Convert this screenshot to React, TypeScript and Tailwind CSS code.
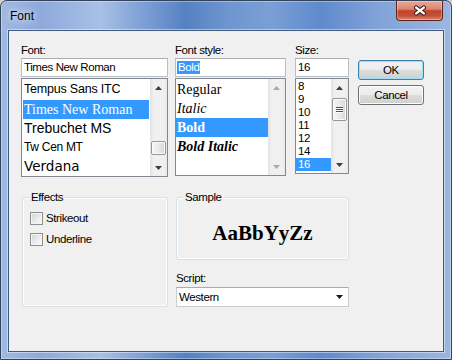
import React from "react";

const ui =
  "font-['Liberation_Sans',Arial,sans-serif] text-[11.5px] leading-[13px] tracking-[-0.4px] text-black";

function Arrow({ up, color }: { up?: boolean; color: string }) {
  return (
    <svg width="7" height="4" viewBox="0 0 7 4" className="block">
      <path d={up ? "M0 4L3.5 0L7 4Z" : "M0 0L7 0L3.5 4Z"} fill={color} />
    </svg>
  );
}

function VScroll({
  enabled,
  thumbClass,
  grip,
}: {
  enabled: boolean;
  thumbClass?: string;
  grip?: boolean;
}) {
  const c = enabled ? "#3f3f3f" : "#a9a9a9";
  return (
    <div className="relative flex h-full w-[17px] shrink-0 flex-col bg-[linear-gradient(to_right,#e2e2e2,#f0f0f0_20%,#f0f0f0_80%,#e9e9e9)]">
      <div className="flex h-[17px] items-center justify-center">
        <Arrow up color={c} />
      </div>
      <div className="flex-1" />
      <div className="flex h-[17px] items-center justify-center">
        <Arrow color={c} />
      </div>
      {thumbClass && (
        <div
          className={`absolute left-[1px] flex w-[15px] flex-col items-center justify-center gap-[1px] rounded-[2px] border border-[#979797] bg-[linear-gradient(to_right,#f5f5f5,#e9e9e9_50%,#d6d6d6)] shadow-[inset_0_0_0_1px_#fbfbfb] ${thumbClass}`}
        >
          {grip && (
            <>
              <div className="h-[1px] w-[7px] bg-[#505050] shadow-[0_1px_0_#ffffff]" />
              <div className="h-[1px] w-[7px] bg-[#505050] shadow-[0_1px_0_#ffffff]" />
              <div className="h-[1px] w-[7px] bg-[#505050] shadow-[0_1px_0_#ffffff]" />
            </>
          )}
        </div>
      )}
    </div>
  );
}

function Button({ label, def }: { label: string; def?: boolean }) {
  return (
    <div
      className={`flex h-[20px] w-[66px] items-center justify-center rounded-[3px] border bg-[linear-gradient(to_bottom,#f2f2f2,#ebebeb_48%,#dddddd_52%,#cfcfcf)] ${
        def
          ? "border-[#3c7fb1] shadow-[inset_0_0_0_1px_#9fe0f8]"
          : "border-[#707070] shadow-[inset_0_0_0_1px_#fcfcfc]"
      }`}
    >
      <span className={ui}>{label}</span>
    </div>
  );
}

function CheckRow({ label }: { label: string }) {
  return (
    <div className="flex h-[13px] items-center gap-[3px]">
      <div className="h-[13px] w-[13px] border border-[#8e8f8f] bg-[linear-gradient(135deg,#d2d3d6,#eeeeee_60%,#f9f9f9)] shadow-[inset_0_0_0_1px_#f4f4f4]" />
      <span className={ui}>{label}</span>
    </div>
  );
}

export default function App() {
  return (
    <div className="h-[360px] w-[452px] bg-[#cfcfcf]">
      <div className="flex h-[360px] w-[452px] flex-col rounded-t-[7px] border border-[#33435a] bg-[linear-gradient(to_right,#9fb9e2_0%,#8eaadb_9%,#a8c0e6_22%,#7c9ed5_32%,#5581c2_41%,#6d95cf_50%,#7a9fd6_60%,#5f8acc_71%,#82a3d9_84%,#9bb6e1_100%)] shadow-[inset_0_0_0_1px_rgba(255,255,255,0.35)]">
        {/* title bar */}
        <div className="flex h-[29px] shrink-0 items-start justify-between">
          <div className="pl-[9px] pt-[8px] font-['Liberation_Sans',Arial,sans-serif] text-[12px] leading-[14px] text-black [text-shadow:0_0_6px_rgba(255,255,255,0.9),0_0_10px_rgba(255,255,255,0.6)]">
            Font
          </div>
          <div className="mr-[8px] flex h-[20px] w-[47px] items-center justify-center rounded-b-[4px] border border-t-0 border-[#5e2418] bg-[linear-gradient(to_bottom,#e9a897,#db8672_42%,#c2432b_52%,#c4503a_78%,#dc8a74)] shadow-[inset_0_0_0_1px_rgba(255,255,255,0.3)]">
            <svg width="14" height="11" viewBox="0 0 14 11" className="block">
              <path d="M3.2 2.6L10.8 8.4M10.8 2.6L3.2 8.4" stroke="#3d211c" strokeWidth="4.4" strokeLinecap="round" />
              <path d="M3.2 2.6L10.8 8.4M10.8 2.6L3.2 8.4" stroke="#ffffff" strokeWidth="2.4" strokeLinecap="round" />
            </svg>
          </div>
        </div>

        {/* client */}
        <div className="mx-[7px] mb-[7px] flex flex-1 flex-col border border-[#415a7c] bg-[#f0f0f0] pl-[12px] pt-[13px] shadow-[0_0_0_1px_rgba(255,255,255,0.45)]">
          {/* top row */}
          <div className="flex items-start">
            {/* Font column */}
            <div className="flex w-[147px] flex-col">
              <div className={`${ui} h-[13px]`}>Font:</div>
              <div className="mt-[1px] flex h-[19px] items-center border border-[#b9bfc9] border-t-[#abadb3] bg-white pl-[2px]">
                <span className={`${ui} leading-[17px]`}>Times New Roman</span>
              </div>
              <div className="mt-[1px] flex h-[99px] border border-[#828790] bg-white">
                <div className="flex flex-1 flex-col overflow-hidden px-[1px]">
                  <div className="h-[21px] pl-[1px] font-['Liberation_Sans',Arial,sans-serif] text-[12.5px] leading-[21px] tracking-[-0.2px] text-black">
                    Tempus Sans ITC
                  </div>
                  <div className="h-[19px] bg-[#3399ff] pl-[1px] font-['Liberation_Serif','Times_New_Roman',serif] text-[14px] leading-[19px] text-white">
                    Times New Roman
                  </div>
                  <div className="h-[19px] pl-[1px] font-['Liberation_Sans',Arial,sans-serif] text-[14px] leading-[19px] text-black">
                    Trebuchet MS
                  </div>
                  <div className="h-[19px] pl-[1px] font-['Liberation_Sans',Arial,sans-serif] text-[12px] leading-[19px] tracking-[-0.3px] text-black">
                    Tw Cen MT
                  </div>
                  <div className="h-[19px] pl-[1px] font-['DejaVu_Sans',Verdana,sans-serif] text-[13.5px] leading-[19px] text-black">
                    Verdana
                  </div>
                </div>
                <VScroll enabled thumbClass="top-[62px] h-[14px]" />
              </div>
            </div>

            {/* Style column */}
            <div className="ml-[7px] flex w-[111px] flex-col">
              <div className={`${ui} h-[13px]`}>Font style:</div>
              <div className="mt-[1px] flex h-[19px] items-center border border-[#b9bfc9] border-t-[#abadb3] bg-white pl-[1px]">
                <span className={`${ui} inline-block h-[13px] bg-[#3399ff] px-[1px] text-white`}>Bold</span>
              </div>
              <div className="mt-[1px] flex h-[98px] border border-[#828790] bg-white">
                <div className="flex flex-1 flex-col overflow-hidden pt-[1px] font-['Liberation_Serif','Times_New_Roman',serif] text-[14px] leading-[19px] text-black">
                  <div className="h-[19px] pl-[1px]">Regular</div>
                  <div className="h-[19px] pl-[1px] italic">Italic</div>
                  <div className="h-[19px] bg-[#3399ff] pl-[1px] font-bold text-white">Bold</div>
                  <div className="h-[19px] pl-[1px] font-bold italic">Bold Italic</div>
                </div>
                <VScroll enabled={false} />
              </div>
            </div>

            {/* Size column */}
            <div className="ml-[9px] flex w-[54px] flex-col">
              <div className={`${ui} h-[13px]`}>Size:</div>
              <div className="mt-[1px] flex h-[19px] items-center border border-[#b9bfc9] border-t-[#abadb3] bg-white pl-[2px]">
                <span className={`${ui} leading-[17px]`}>16</span>
              </div>
              <div className="mt-[1px] flex h-[96px] border border-[#828790] bg-white">
                <div className={`${ui} flex flex-1 flex-col overflow-hidden pt-[1px]`}>
                  <div className="h-[13px] pl-[2px]">8</div>
                  <div className="h-[13px] pl-[2px]">9</div>
                  <div className="h-[13px] pl-[2px]">10</div>
                  <div className="h-[13px] pl-[2px]">11</div>
                  <div className="h-[13px] pl-[2px]">12</div>
                  <div className="h-[13px] pl-[2px]">14</div>
                  <div className="h-[13px] bg-[#3399ff] pl-[2px] text-white">16</div>
                </div>
                <VScroll enabled thumbClass="top-[19px] h-[23px]" grip />
              </div>
            </div>

            {/* Buttons */}
            <div className="ml-[9px] mt-[16px] flex flex-col gap-[5px]">
              <Button label="OK" def />
              <Button label="Cancel" />
            </div>
          </div>

          {/* bottom row */}
          <div className="ml-[1px] mt-[20px] flex items-start gap-[8px]">
            {/* Effects */}
            <div className="relative flex h-[110px] w-[146px] flex-col gap-[8px] rounded-[3px] border border-[#d5dfe5] pl-[7px] pt-[14px] shadow-[inset_0_0_0_1px_#ffffff]">
              <span className={`${ui} absolute -top-[7px] left-[6px] bg-[#f0f0f0] px-[2px]`}>Effects</span>
              <CheckRow label="Strikeout" />
              <CheckRow label="Underline" />
            </div>

            {/* Sample + Script */}
            <div className="flex w-[173px] flex-col">
              <div className="relative h-[63px] rounded-[3px] border border-[#d5dfe5] pt-[23px] text-center shadow-[inset_0_0_0_1px_#ffffff]">
                <span className={`${ui} absolute -top-[7px] left-[6px] bg-[#f0f0f0] px-[2px]`}>Sample</span>
                <div className="font-['Liberation_Serif','Times_New_Roman',serif] text-[21px] leading-[24px] font-bold text-black">
                  AaBbYyZz
                </div>
              </div>
              <div className={`${ui} mt-[12px] h-[13px]`}>Script:</div>
              <div className="mt-[2px] flex h-[20px] items-center justify-between border border-[#c9ccd2] border-t-[#a9abb0] bg-white pl-[2px] pr-[5px]">
                <span className={`${ui} leading-[18px]`}>Western</span>
                <Arrow color="#1a1a1a" />
              </div>
            </div>
          </div>
        </div>
      </div>
    </div>
  );
}
